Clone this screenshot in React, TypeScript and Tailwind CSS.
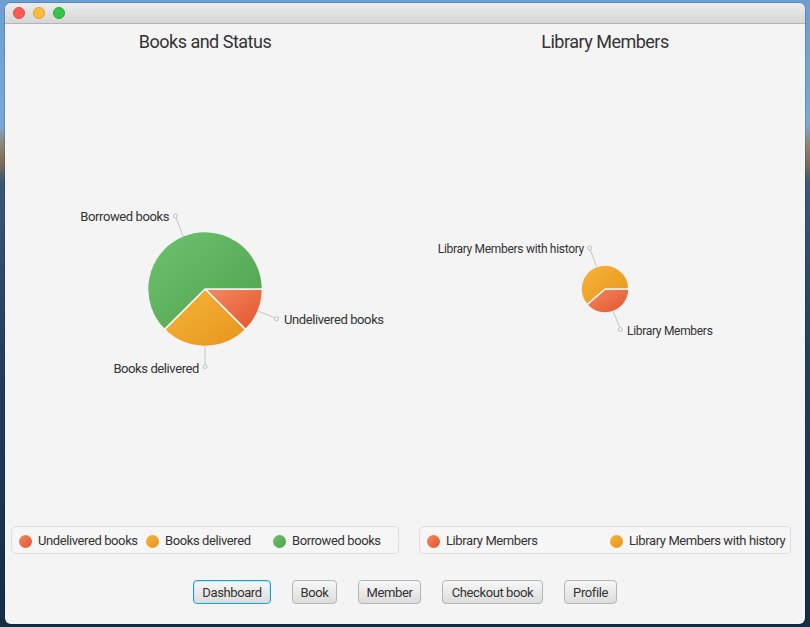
import React from 'react';

// Dashboard window: two pie charts with legends and a row of nav buttons

interface Slice {
    name: string;
    path: string;
    grad: string;
    label: { line: [number, number, number, number]; x: number; y: number; anchor: 'start' | 'end' };
}

interface ChartProps {
    id: string;
    title: string;
    x0: number;
    slices: Slice[];
    labelSize: number;
    labelTracking: string;
    legend: { name: string; grad: string }[];
    legendWidth: string;
    itemWidth: string;
}

const gradients = [
    { id: 'red', from: '#f58a62', to: '#e2522a' },
    { id: 'orange', from: '#f7b43c', to: '#e6951a' },
    { id: 'green', from: '#6fc26f', to: '#4da24d' },
];

function PieChart({ id, title, x0, slices, labelSize, labelTracking, legend, legendWidth, itemWidth }: ChartProps) {
    return (
        <div className="flex-1 flex flex-col items-center">
            <div className="h-[29px] pt-[7px] text-[18px] leading-[22px] tracking-[-0.5px] text-[#333333]">{title}</div>
            <svg width={400} height={467} viewBox={`${x0} 53 400 467`} className="block">
                <defs>
                    {gradients.map((g) => (
                        <linearGradient key={g.id} id={`${id}-${g.id}`} x1="0" y1="0" x2="1" y2="1">
                            <stop offset="0%" stopColor={g.from} />
                            <stop offset="100%" stopColor={g.to} />
                        </linearGradient>
                    ))}
                </defs>
                {slices.map((s) => (
                    <path key={s.name} d={s.path} fill={`url(#${id}-${s.grad})`} stroke="#f4f4f4" strokeWidth={1.6} strokeLinejoin="round" />
                ))}
                {slices.map((s) => {
                    const [ax, ay, bx, by] = s.label.line;
                    return (
                        <g key={s.name + '-label'}>
                            <line x1={ax} y1={ay} x2={bx} y2={by} stroke="#c4c4c4" strokeWidth={1} />
                            <circle cx={bx} cy={by} r={2} fill="#f4f4f4" stroke="#c0c0c0" strokeWidth={1} />
                            <text
                                x={s.label.x}
                                y={s.label.y}
                                fontSize={labelSize}
                                fill="#333333"
                                textAnchor={s.label.anchor}
                                dominantBaseline="central"
                                className={labelTracking}
                            >
                                {s.name}
                            </text>
                        </g>
                    );
                })}
            </svg>
            <div className={`mt-[6px] h-[28px] ${legendWidth} flex items-center pl-[7px] pt-[2px] border border-[#dedede] rounded-[5px] bg-[#f6f6f6]`}>
                {legend.map((l) => (
                    <div key={l.name} className={`flex items-center gap-[6px] shrink-0 ${itemWidth}`}>
                        <span
                            className={`w-[13px] h-[13px] shrink-0 rounded-full ${
                                l.grad === 'red'
                                    ? 'bg-[linear-gradient(135deg,#f58a62,#e2522a)]'
                                    : l.grad === 'orange'
                                    ? 'bg-[linear-gradient(135deg,#f7b43c,#e6951a)]'
                                    : 'bg-[linear-gradient(135deg,#6fc26f,#4da24d)]'
                            }`}
                        />
                        <span className="text-[13px] tracking-[-0.4px] text-[#333333] whitespace-nowrap">{l.name}</span>
                    </div>
                ))}
            </div>
        </div>
    );
}

const bookSlices: Slice[] = [
    {
        name: 'Undelivered books',
        path: 'M205,289 L262.5,289 A57.5,57.5 0 0 1 245.66,329.66 Z',
        grad: 'red',
        label: { line: [258.1, 311, 276.6, 318.7], x: 284, y: 319.5, anchor: 'start' },
    },
    {
        name: 'Books delivered',
        path: 'M205,289 L245.66,329.66 A57.5,57.5 0 0 1 164.34,329.66 Z',
        grad: 'orange',
        label: { line: [205, 346.5, 205, 366.5], x: 199, y: 368, anchor: 'end' },
    },
    {
        name: 'Borrowed books',
        path: 'M205,289 L164.34,329.66 A57.5,57.5 0 1 1 262.5,289 Z',
        grad: 'green',
        label: { line: [183, 235.9, 175.3, 216], x: 169, y: 216, anchor: 'end' },
    },
];

const memberSlices: Slice[] = [
    {
        name: 'Library Members',
        path: 'M605,289 L629,289 A24,24 0 0 1 586.89,304.75 Z',
        grad: 'red',
        label: { line: [613.4, 311.5, 620.4, 329.5], x: 627, y: 330.5, anchor: 'start' },
    },
    {
        name: 'Library Members with history',
        path: 'M605,289 L586.89,304.75 A24,24 0 1 1 629,289 Z',
        grad: 'orange',
        label: { line: [596.6, 266.5, 589.6, 248], x: 584, y: 248.5, anchor: 'end' },
    },
];

const buttons = [
    { label: 'Dashboard', w: 'w-[78px]', focus: true },
    { label: 'Book', w: 'w-[45px]', focus: false },
    { label: 'Member', w: 'w-[63px]', focus: false },
    { label: 'Checkout book', w: 'w-[101px]', focus: false },
    { label: 'Profile', w: 'w-[53px]', focus: false },
];

export default function App() {
    return (
        <div className="w-[810px] h-[627px] overflow-hidden pt-[3px] px-[5px] font-['Roboto','Liberation_Sans',sans-serif] bg-[linear-gradient(180deg,#6b9fd2_0%,#7aa8d6_20%,#8c8676_23%,#7d6d58_26%,#3a5878_29%,#23405e_55%,#172c45_100%)]">
            <div className="w-[800px] h-[621px] rounded-[6px] overflow-hidden bg-[#f4f4f4] flex flex-col shadow-[0_0_0_1px_rgba(0,0,0,0.15)]">
                {/* title bar */}
                <div className="h-[21px] shrink-0 flex items-center gap-[8px] pl-[8px] bg-[linear-gradient(180deg,#ececec,#d6d6d6)] border-b border-[#b4b4b4]">
                    <span className="w-[12px] h-[12px] rounded-full bg-[#fc5b57] border border-[#e2463f]" />
                    <span className="w-[12px] h-[12px] rounded-full bg-[#fdbb3f] border border-[#e0a030]" />
                    <span className="w-[12px] h-[12px] rounded-full bg-[#33c748] border border-[#24a83a]" />
                </div>

                <div className="flex">
                    <PieChart
                        id="books"
                        title="Books and Status"
                        x0={5}
                        slices={bookSlices}
                        labelSize={13}
                        labelTracking="tracking-[-0.4px]"
                        legend={[
                            { name: 'Undelivered books', grad: 'red' },
                            { name: 'Books delivered', grad: 'orange' },
                            { name: 'Borrowed books', grad: 'green' },
                        ]}
                        legendWidth="w-[388px]"
                        itemWidth="w-[127px]"
                    />
                    <PieChart
                        id="members"
                        title="Library Members"
                        x0={405}
                        slices={memberSlices}
                        labelSize={12}
                        labelTracking="tracking-[-0.3px]"
                        legend={[
                            { name: 'Library Members', grad: 'red' },
                            { name: 'Library Members with history', grad: 'orange' },
                        ]}
                        legendWidth="w-[372px]"
                        itemWidth="w-[183px]"
                    />
                </div>

                <div className="mt-[26px] flex justify-center gap-[21px]">
                    {buttons.map((b) => (
                        <button
                            key={b.label}
                            className={`${b.w} h-[24px] pt-[1px] rounded-[4px] text-[13px] tracking-[-0.4px] text-[#333333] bg-[linear-gradient(180deg,#f7f7f7,#dcdcdc)] border ${
                                b.focus ? 'border-[#1aa3d8] shadow-[inset_0_0_0_1px_#c6e4f0]' : 'border-[#b5b5b5]'
                            }`}
                        >
                            {b.label}
                        </button>
                    ))}
                </div>
            </div>
        </div>
    );
}
